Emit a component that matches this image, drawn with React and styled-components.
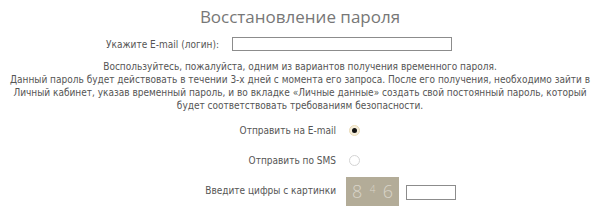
import React from "react";
import styled, { createGlobalStyle } from "styled-components";

const GlobalStyle = createGlobalStyle`
  html, body {
    margin: 0;
    padding: 0;
    background: #ffffff;
  }
  body {
    font-family: "DejaVu Sans Condensed", "DejaVu Sans", sans-serif;
    font-size: 10px;
    color: #555555;
  }
`;

const App = () => {
  return (
    <>
      <GlobalStyle />
      <Wrapper>
        <Title>Восстановление пароля</Title>
        <EmailRow>
          <Label>Укажите E-mail (логин):</Label>
          <EmailInput type="text" />
        </EmailRow>
        <Info>
          Воспользуйтесь, пожалуйста, одним из вариантов получения временного пароля.
          <br />
          Данный пароль будет действовать в течении 3-х дней с момента его запроса. После его получения, необходимо зайти в
          Личный кабинет, указав временный пароль, и во вкладке «Личные данные» создать свой постоянный пароль, который
          будет соответствовать требованиям безопасности.
        </Info>
        <Options>
          <Label>Отправить на E-mail</Label>
          <Cell>
            <Radio checked>
              <Dot />
            </Radio>
          </Cell>
          <Label>Отправить по SMS</Label>
          <Cell>
            <Radio />
          </Cell>
          <Label>Введите цифры с картинки</Label>
          <Cell>
            <Captcha>
              <Digit>8</Digit>
              <Digit small>4</Digit>
              <Digit>6</Digit>
            </Captcha>
            <CodeInput type="text" />
          </Cell>
        </Options>
      </Wrapper>
    </>
  );
};

const Wrapper = styled.div`
  width: 600px;
  height: 216px;
  overflow: hidden;
  padding-top: 5px;
  box-sizing: border-box;
`;

const Title = styled.h2`
  margin: 0;
  font-family: "Open Sans", sans-serif;
  font-weight: 400;
  font-size: 17px;
  line-height: 24px;
  color: #777777;
  text-align: center;
`;

const EmailRow = styled.div`
  display: flex;
  align-items: center;
  justify-content: center;
  gap: 13px;
  margin-top: 8px;
  padding-right: 42px;
`;

const Label = styled.span`
  color: #555555;
  text-align: right;
  white-space: nowrap;
`;

const EmailInput = styled.input`
  width: 220px;
  height: 14px;
  box-sizing: border-box;
  border: 1px solid #8c8c8c;
  padding: 0;
  margin: 0;
`;

const Info = styled.p`
  margin: 9px auto 0;
  width: 586px;
  text-align: center;
  line-height: 13px;
  color: #555555;
`;

const Options = styled.div`
  display: grid;
  grid-template-columns: 336px 1fr;
  grid-auto-rows: 30px;
  column-gap: 10px;
  align-items: center;
  margin-top: 3px;
`;

const Cell = styled.div`
  display: flex;
  align-items: center;
  gap: 7px;
`;

const Radio = styled.span`
  position: relative;
  width: 11px;
  height: 11px;
  margin-left: 3px;
  border-radius: 50%;
  box-sizing: border-box;
  border: 1px solid ${(p) => (p.checked ? "#eadbb8" : "#d4d4d4")};
  background: ${(p) => (p.checked ? "#f6eedb" : "#ffffff")};
  display: flex;
  align-items: center;
  justify-content: center;
`;

const Dot = styled.span`
  width: 5px;
  height: 5px;
  border-radius: 50%;
  background: #111111;
`;

const Captcha = styled.div`
  width: 53px;
  height: 29px;
  box-sizing: border-box;
  padding: 0 6px 0 6px;
  background: #b3ac98;
  display: flex;
  align-items: center;
  justify-content: space-between;
  margin-top: 2px;
`;

const Digit = styled.span`
  font-family: "Open Sans", sans-serif;
  font-weight: 300;
  font-size: ${(p) => (p.small ? "10px" : "18px")};
  line-height: 1;
  color: #d9d4c8;
  margin-top: ${(p) => (p.small ? "-5px" : "0")};
`;

const CodeInput = styled.input`
  width: 50px;
  height: 15px;
  box-sizing: border-box;
  border: 1px solid #8c8c8c;
  padding: 0;
  margin: 0;
  margin-top: 4px;
`;

export default App;
